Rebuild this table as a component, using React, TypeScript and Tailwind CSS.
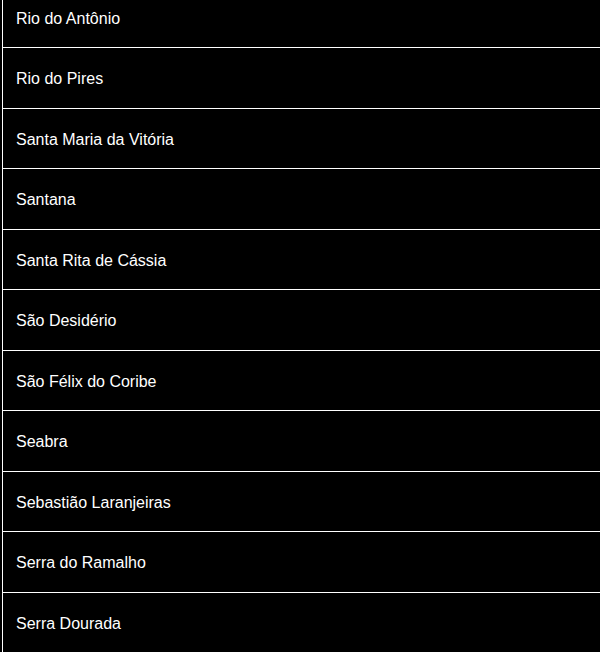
import React from "react";

const items = [
  "Rio do Antônio",
  "Rio do Pires",
  "Santa Maria da Vitória",
  "Santana",
  "Santa Rita de Cássia",
  "São Desidério",
  "São Félix do Coribe",
  "Seabra",
  "Sebastião Laranjeiras",
  "Serra do Ramalho",
  "Serra Dourada",
];

export default function App() {
  return (
    <div className="w-[600px] h-[652px] overflow-hidden bg-black" style={{ fontFamily: '"Liberation Sans", Arial, sans-serif' }}>
      <div className="ml-[2px] border-l border-white -mt-[12.5px]">
        {items.map((name) => (
          <div
            key={name}
            className="box-border h-[60.5px] border-b border-white flex items-center pl-[13px] pt-[3px] text-[16px] text-white"
          >
            {name}
          </div>
        ))}
      </div>
    </div>
  );
}
